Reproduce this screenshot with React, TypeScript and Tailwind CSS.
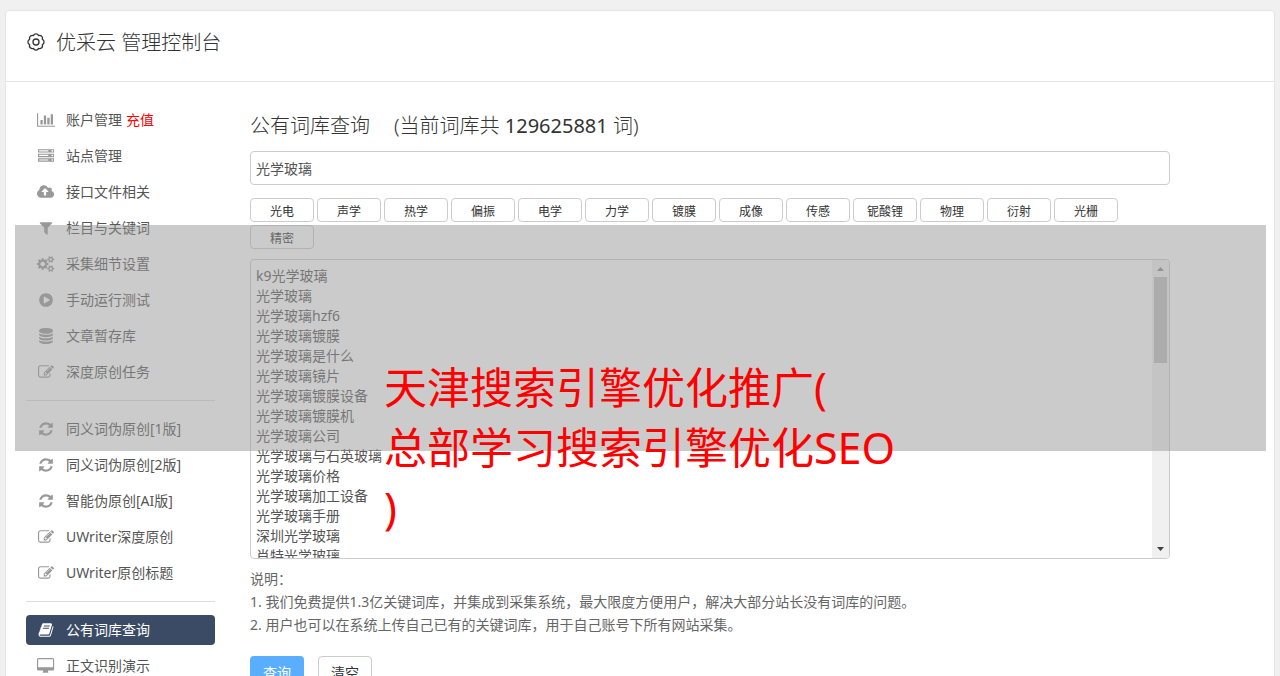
import React from 'react';

interface Glyph {
  width: number;
  path: string;
}

const glyphs: Record<string, Glyph> = {
  chart: {
    width: 2048,
    path: 'M640 896v512h-256v-512h256zm384-512v1024h-256v-1024h256zm1024 1152v128h-2048v-1536h128v1408h1920zm-640-896v768h-256v-768h256zm384-384v1152h-256v-1152h256z',
  },
  server: {
    width: 1792,
    path: 'M128 1408h1024v-128h-1024v128zm0-512h1024v-128h-1024v128zm1568 448q0-40-28-68t-68-28-68 28-28 68 28 68 68 28 68-28 28-68zm-1568-960h1024v-128h-1024v128zm1568 448q0-40-28-68t-68-28-68 28-28 68 28 68 68 28 68-28 28-68zm0-512q0-40-28-68t-68-28-68 28-28 68 28 68 68 28 68-28 28-68zm96 832v384h-1792v-384h1792zm0-512v384h-1792v-384h1792zm0-512v384h-1792v-384h1792z',
  },
  upload: {
    width: 1920,
    path: 'M1280 864q0-14-9-23l-352-352q-9-9-23-9t-23 9l-351 351q-10 12-10 24 0 14 9 23t23 9h224v352q0 13 9.5 22.5t22.5 9.5h192q13 0 22.5-9.5t9.5-22.5v-352h224q13 0 22.5-9.5t9.5-22.5zm640 288q0 159-112.5 271.5t-271.5 112.5h-1088q-185 0-316.5-131.5t-131.5-316.5q0-130 70-240t188-165q-2-30-2-43 0-212 150-362t362-150q156 0 285.5 87t188.5 231q71-62 166-62 106 0 181 75t75 181q0 76-41 138 130 31 213.5 135.5t83.5 238.5z',
  },
  filter: {
    width: 1792,
    path: 'M1595 295q17 41-14 70l-493 493v742q0 42-39 59-13 5-25 5-27 0-45-19l-256-256q-19-19-19-45v-486l-493-493q-31-29-14-70 17-39 59-39h1280q42 0 59 39z',
  },
  cogs: {
    width: 1920,
    path: 'M896 896q0-106-75-181t-181-75-181 75-75 181 75 181 181 75 181-75 75-181zm768 512q0-52-38-90t-90-38-90 38-38 90q0 53 37.5 90.5t90.5 37.5 90.5-37.5 37.5-90.5zm0-1024q0-52-38-90t-90-38-90 38-38 90q0 53 37.5 90.5t90.5 37.5 90.5-37.5 37.5-90.5zm-384 421v185q0 10-7 19.5t-16 10.5l-155 24q-11 35-32 76 34 48 90 115 7 11 7 20 0 12-7 19-23 30-82.5 89.5t-78.5 59.5q-11 0-21-7l-115-90q-37 19-77 31-11 108-23 155-7 24-30 24h-186q-11 0-20-7.5t-10-17.5l-23-153q-34-10-75-31l-118 89q-7 7-20 7-11 0-21-8-144-133-144-160 0-9 7-19 10-14 41-53t47-61q-23-44-35-82l-152-24q-10-1-17-9.5t-7-19.5v-185q0-10 7-19.5t16-10.5l155-24q11-35 32-76-34-48-90-115-7-11-7-20 0-12 7-20 22-30 82-89t79-59q11 0 21 7l115 90q34-18 77-32 11-108 23-154 7-24 30-24h186q11 0 20 7.5t10 17.5l23 153q34 10 75 31l118-89q8-7 20-7 11 0 21 8 144 133 144 160 0 8-7 19-12 16-42 54t-45 60q23 48 34 82l152 23q10 2 17 10.5t7 19.5zm640 533v140q0 16-149 31-12 27-30 52 51 113 51 138 0 4-4 7-122 71-124 71-8 0-46-47t-52-68q-20 2-30 2t-30-2q-14 21-52 68t-46 47q-2 0-124-71-4-3-4-7 0-25 51-138-18-25-30-52-149-15-149-31v-140q0-16 149-31 13-29 30-52-51-113-51-138 0-4 4-7 4-2 35-20t59-34 30-16q8 0 46 46.5t52 67.5q20-2 30-2t30 2q51-71 92-112l6-2q4 0 124 70 4 3 4 7 0 25-51 138 17 23 30 52 149 15 149 31zm0-1024v140q0 16-149 31-12 27-30 52 51 113 51 138 0 4-4 7-122 71-124 71-8 0-46-47t-52-68q-20 2-30 2t-30-2q-14 21-52 68t-46 47q-2 0-124-71-4-3-4-7 0-25 51-138-18-25-30-52-149-15-149-31v-140q0-16 149-31 13-29 30-52-51-113-51-138 0-4 4-7 4-2 35-20t59-34 30-16q8 0 46 46.5t52 67.5q20-2 30-2t30 2q51-71 92-112l6-2q4 0 124 70 4 3 4 7 0 25-51 138 17 23 30 52 149 15 149 31z',
  },
  play: {
    width: 1792,
    path: 'M896 128q209 0 385.5 103t279.5 279.5 103 385.5-103 385.5-279.5 279.5-385.5 103-385.5-103-279.5-279.5-103-385.5 103-385.5 279.5-279.5 385.5-103zm384 823q32-18 32-55t-32-55l-544-320q-31-19-64-1-32 19-32 56v640q0 37 32 56 16 8 32 8 17 0 32-9z',
  },
  database: {
    width: 1792,
    path: 'M896 768q237 0 443-43t325-127v170q0 69-103 128t-280 93.5-385 34.5-385-34.5-280-93.5-103-128v-170q119 84 325 127t443 43zm0 768q237 0 443-43t325-127v170q0 69-103 128t-280 93.5-385 34.5-385-34.5-280-93.5-103-128v-170q119 84 325 127t443 43zm0-384q237 0 443-43t325-127v170q0 69-103 128t-280 93.5-385 34.5-385-34.5-280-93.5-103-128v-170q119 84 325 127t443 43zm0-1152q208 0 385 34.5t280 93.5 103 128v128q0 69-103 128t-280 93.5-385 34.5-385-34.5-280-93.5-103-128v-128q0-69 103-128t280-93.5 385-34.5z',
  },
  edit: {
    width: 1792,
    path: 'M888 1184l116-116-152-152-116 116v56h96v96h56zm440-720q-16-16-33 1l-350 350q-17 17-1 33t33-1l350-350q17-17 1-33zm80 594v190q0 119-84.5 203.5t-203.5 84.5h-832q-119 0-203.5-84.5t-84.5-203.5v-832q0-119 84.5-203.5t203.5-84.5h832q63 0 117 25 15 7 18 23 3 17-9 29l-49 49q-14 14-32 8-23-6-45-6h-832q-66 0-113 47t-47 113v832q0 66 47 113t113 47h832q66 0 113-47t47-113v-126q0-13 9-22l64-64q15-15 35-7t20 29zm-96-738l288 288-672 672h-288v-288zm444 132l-92 92-288-288 92-92q28-28 68-28t68 28l152 152q28 28 28 68t-28 68z',
  },
  refresh: {
    width: 1792,
    path: 'M1639 1056q0 5-1 7-64 268-268 434.5t-478 166.5q-146 0-282.5-55t-243.5-157l-129 129q-19 19-45 19t-45-19-19-45v-448q0-26 19-45t45-19h448q26 0 45 19t19 45-19 45l-137 137q71 66 161 102t187 36q134 0 250-65t186-179q11-17 53-117 8-23 30-23h192q13 0 22.5 9.5t9.5 22.5zm25-800v448q0 26-19 45t-45 19h-448q-26 0-45-19t-19-45 19-45l138-138q-148-137-349-137-134 0-250 65t-186 179q-11 17-53 117-8 23-30 23h-199q-13 0-22.5-9.5t-9.5-22.5v-7q65-268 270-434.5t480-166.5q146 0 284 55.5t245 156.5l130-129q19-19 45-19t45 19 19 45z',
  },
  book: {
    width: 1792,
    path: 'M1703 478q40 57 18 129l-275 906q-19 64-76.5 107.5t-122.5 43.5h-923q-77 0-148.5-53.5t-99.5-131.5q-24-67-2-127 0-4 3-27t4-37q1-8-3-21.5t-3-19.5q2-11 8-21t16.5-23.5 16.5-23.5q23-38 45-91.5t30-91.5q3-10 .5-30t-.5-28q3-11 17-28t17-23q21-36 42-92t25-90q1-9-2.5-32t.5-28q4-13 22-30.5t22-22.5q19-26 42.5-84.5t27.5-96.5q1-8-3-25.5t-2-26.5q2-8 9-18t18-23 17-21q8-12 16.5-30.5t15-35 16-36 19.5-32 26.5-23.5 36-11.5 47.5 5.5l-1 3q38-9 51-9h761q74 0 114 56t18 130l-274 906q-36 119-71.5 153.5t-128.5 34.5h-869q-27 0-38 15-11 16-1 43 24 70 144 70h923q29 0 56-15.5t35-41.5l300-987q7-22 5-57 38 15 59 43zm-1064 2q-4 13 2 22.5t20 9.5h608q13 0 25.5-9.5t16.5-22.5l21-64q4-13-2-22.5t-20-9.5h-608q-13 0-25.5 9.5t-16.5 22.5zm-83 256q-4 13 2 22.5t20 9.5h608q13 0 25.5-9.5t16.5-22.5l21-64q4-13-2-22.5t-20-9.5h-608q-13 0-25.5 9.5t-16.5 22.5z',
  },
  desktop: {
    width: 1920,
    path: 'M1792 992v-832q0-13-9.5-22.5t-22.5-9.5h-1600q-13 0-22.5 9.5t-9.5 22.5v832q0 13 9.5 22.5t22.5 9.5h1600q13 0 22.5-9.5t9.5-22.5zm128-832v1088q0 66-47 113t-113 47h-544q0 37 16 77.5t32 71 16 43.5q0 26-19 45t-45 19h-512q-26 0-45-19t-19-45q0-14 16-44t32-70 16-78h-544q-66 0-113-47t-47-113v-1088q0-66 47-113t113-47h1600q66 0 113 47t47 113z',
  },
};

interface MenuItem {
  icon: string;
  label: string;
  extra?: string;
  active?: boolean;
}

// One array per block, blocks are separated by a line
const menu: MenuItem[][] = [
  [
    { icon: 'chart', label: '账户管理', extra: '充值' },
    { icon: 'server', label: '站点管理' },
    { icon: 'upload', label: '接口文件相关' },
    { icon: 'filter', label: '栏目与关键词' },
    { icon: 'cogs', label: '采集细节设置' },
    { icon: 'play', label: '手动运行测试' },
    { icon: 'database', label: '文章暂存库' },
    { icon: 'edit', label: '深度原创任务' },
  ],
  [
    { icon: 'refresh', label: '同义词伪原创[1版]' },
    { icon: 'refresh', label: '同义词伪原创[2版]' },
    { icon: 'refresh', label: '智能伪原创[AI版]' },
    { icon: 'edit', label: 'UWriter深度原创' },
    { icon: 'edit', label: 'UWriter原创标题' },
  ],
  [
    { icon: 'book', label: '公有词库查询', active: true },
    { icon: 'desktop', label: '正文识别演示' },
  ],
];

const tags = ['光电', '声学', '热学', '偏振', '电学', '力学', '镀膜', '成像', '传感', '铌酸锂', '物理', '衍射', '光栅', '精密'];

const words = [
  'k9光学玻璃',
  '光学玻璃',
  '光学玻璃hzf6',
  '光学玻璃镀膜',
  '光学玻璃是什么',
  '光学玻璃镜片',
  '光学玻璃镀膜设备',
  '光学玻璃镀膜机',
  '光学玻璃公司',
  '光学玻璃与石英玻璃',
  '光学玻璃价格',
  '光学玻璃加工设备',
  '光学玻璃手册',
  '深圳光学玻璃',
  '肖特光学玻璃',
];

function MenuIcon({ name }: { name: string }) {
  const glyph = glyphs[name];
  return (
    <svg viewBox={`0 0 ${glyph.width} 1792`} className="h-4 w-auto" fill="currentColor" aria-hidden="true">
      <path d={glyph.path} />
    </svg>
  );
}

function GearIcon() {
  return (
    <svg viewBox="0 0 20 20" className="size-5" fill="none" stroke="currentColor" strokeWidth="1.3" strokeLinejoin="round" aria-hidden="true">
      <path d="M7.36 3.63A2.9 2.9 0 0 1 12.64 3.63A2.9 2.9 0 0 1 16.37 7.36A2.9 2.9 0 0 1 16.37 12.64A2.9 2.9 0 0 1 12.64 16.37A2.9 2.9 0 0 1 7.36 16.37A2.9 2.9 0 0 1 3.63 12.64A2.9 2.9 0 0 1 3.63 7.36A2.9 2.9 0 0 1 7.36 3.63Z" />
      <circle cx="10" cy="10" r="3" />
    </svg>
  );
}

function Sidebar() {
  return (
    <nav className="w-[189px] shrink-0 text-sm">
      {menu.map((group, i) => (
        <ul key={i} className={`flex flex-col gap-1.5 ${i > 0 ? 'mt-[13px] border-t border-[#dcdcdc] pt-[13px]' : ''}`}>
          {group.map(item => (
            <li key={item.label}>
              <a href="#" className={`flex h-[30px] items-center rounded pl-2.5 ${item.active ? 'bg-[#3b4b66] text-white' : 'text-[#555]'}`}>
                <span className={`mr-2.5 flex w-5 justify-center ${item.active ? 'text-white' : 'text-[#999]'}`}>
                  <MenuIcon name={item.icon} />
                </span>
                {item.label}
                {item.extra && <span className="ml-1 text-[#f00]">{item.extra}</span>}
              </a>
            </li>
          ))}
        </ul>
      ))}
    </nav>
  );
}

function WordList() {
  return (
    <div className="mt-2.5 flex h-[300px] overflow-hidden rounded border border-[#ccc]">
      <textarea
        aria-label="词库结果"
        defaultValue={words.join('\n')}
        className="min-w-0 flex-1 resize-none overflow-hidden px-[5px] pt-1.5 text-sm leading-5 text-[#555] outline-none"
      />
      <div className="flex w-[17px] flex-col items-center justify-between bg-[#f0f0f0] py-[7px]">
        <div className="flex flex-col items-center gap-1.5">
          <svg viewBox="0 0 7 4" className="h-1 w-[7px]" fill="#8c8c8c" aria-hidden="true">
            <path d="M0 4h7L3.5 0z" />
          </svg>
          <div className="h-[86px] w-[13px] bg-[#c1c1c1]" />
        </div>
        <svg viewBox="0 0 7 4" className="h-1 w-[7px]" fill="#404040" aria-hidden="true">
          <path d="M0 0h7L3.5 4z" />
        </svg>
      </div>
    </div>
  );
}

export default function App() {
  return (
    <div className="relative h-screen overflow-hidden bg-[#f0f0f0] px-[5px] pt-2.5 font-['Noto_Sans','Noto_Sans_CJK_SC',sans-serif] text-[#333]">
      <div className="min-h-full rounded border border-[#e5e5e5] bg-white">
        <header className="flex h-[71px] items-start border-b border-[#e5e5e5] px-5 pt-4">
          <h1 className="flex items-center gap-2.5 text-xl leading-7 font-light">
            <GearIcon />
            <span className="pt-0.5">优采云 管理控制台</span>
          </h1>
        </header>

        <div className="flex gap-[35px] px-5 pt-[23px]">
          <Sidebar />
          <main className="max-w-[920px] flex-1">
            <h2 className="flex gap-6 pt-[7px] text-xl leading-7 font-light">
              <span>公有词库查询</span>
              <span>(当前词库共 <span className="font-normal">129625881</span> 词)</span>
            </h2>
            <input
              type="text"
              aria-label="关键词"
              defaultValue="光学玻璃"
              className="mt-[11px] block h-[34px] w-full rounded border border-[#ccc] px-[5px] text-sm text-[#555] outline-none"
            />
            <div className="mt-[13px] flex flex-wrap gap-[3px]">
              {tags.map(tag => (
                <button key={tag} type="button" className="flex h-6 w-16 items-center justify-center rounded border border-[#ccc] bg-white pt-1 text-xs">
                  {tag}
                </button>
              ))}
            </div>
            <WordList />
            <div className="mt-2 text-sm leading-[23px] text-[#666]">
              <p>说明：</p>
              <p>1. 我们免费提供1.3亿关键词库，并集成到采集系统，最大限度方便用户，解决大部分站长没有词库的问题。</p>
              <p>2. 用户也可以在系统上传自己已有的关键词库，用于自己账号下所有网站采集。</p>
            </div>
            <div className="mt-5 flex gap-3.5 text-sm">
              <button type="button" className="h-[34px] w-[54px] rounded bg-[#5aaeff] text-white">查询</button>
              <button type="button" className="h-[34px] w-[54px] rounded border border-[#ccc] bg-white">清空</button>
            </div>
          </main>
        </div>
      </div>

      {/* Caption band over the page */}
      <div className="pointer-events-none absolute top-[225px] right-3.5 left-[15px] h-[226px] bg-[#979797]/50">
        <p className="mx-auto w-[513px] pt-[133px] text-[43px] leading-[60px] text-[#f00]">
          天津搜索引擎优化推广(
          <br />
          总部学习搜索引擎优化SEO
          <br />)
        </p>
      </div>
    </div>
  );
}
